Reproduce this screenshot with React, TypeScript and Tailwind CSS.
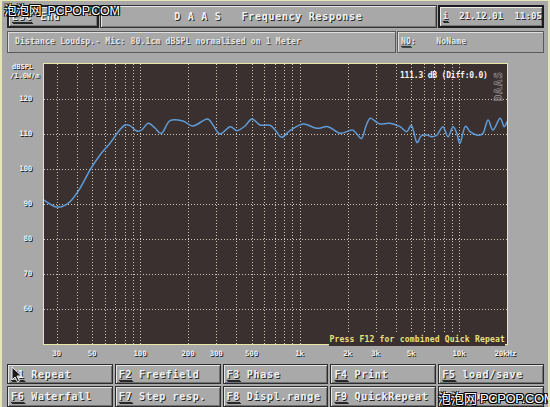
import React from 'react';

const px = (f: number) => 44 + 159.5 * Math.log10(f / 25);
const py = (db: number) => 64 + (130 - db) * 3.5;

const vGrid = [30, 40, 50, 60, 70, 80, 90, 100, 200, 300, 400, 500, 600, 700, 800, 900, 1000, 2000, 3000, 4000, 5000, 6000, 7000, 8000, 9000, 10000];
const hGrid = [120, 110, 100, 90, 80, 70, 60];

const xLabels: [number, string][] = [
  [30, '30'], [50, '50'], [100, '100'], [200, '200'], [300, '300'], [500, '500'],
  [1000, '1k'], [2000, '2k'], [3000, '3k'], [5000, '5k'], [10000, '10k'], [19500, '20kHz'],
];

// traced response, page coordinates
const curve = [
  [44, 200], [50, 204], [55, 206.7], [61.7, 206.7], [70, 201.7], [80, 188.3], [90, 170], [100, 155],
  [110, 143.3], [118.3, 131.7], [125, 125], [130, 125.7], [136.7, 131], [141.7, 130], [148.3, 123.3],
  [155, 128], [161.7, 133.3], [170, 120.7], [183, 121], [193, 126], [207, 119], [213, 125], [220, 134],
  [230, 126.7], [237, 130.7], [245, 126], [252, 119], [260, 125], [270, 125.3], [276, 131], [281.7, 137.3],
  [290, 130.7], [303, 124], [316.7, 128.3], [328, 126.7], [340, 133.3], [351.7, 130], [356, 133],
  [361.7, 138.3], [366, 126], [370, 118.3], [375, 121], [380, 124], [390, 123.3], [400, 126.7],
  [406.7, 131.7], [411.7, 125.7], [416.7, 142.3], [421, 136], [426.7, 135], [431.7, 136.7], [437, 135],
  [443, 126.7], [448, 136.7], [453, 126.7], [457, 134], [460, 143.3], [465, 126.7], [470, 131.7],
  [476.7, 135], [483, 133.3], [488, 120], [493, 130], [500, 118.3], [504, 126.7], [507, 121.7],
];

// catmull-rom -> bezier so the trace looks like a smooth measurement curve
const smoothPath = (pts: number[][]) => {
  let d = `M${pts[0][0]},${pts[0][1]}`;
  for (let i = 0; i < pts.length - 1; i++) {
    const p0 = pts[i - 1] || pts[i];
    const p1 = pts[i];
    const p2 = pts[i + 1];
    const p3 = pts[i + 2] || p2;
    const c1x = p1[0] + (p2[0] - p0[0]) / 6;
    const c1y = p1[1] + (p2[1] - p0[1]) / 6;
    const c2x = p2[0] - (p3[0] - p1[0]) / 6;
    const c2y = p2[1] - (p3[1] - p1[1]) / 6;
    d += ` C${c1x.toFixed(1)},${c1y.toFixed(1)} ${c2x.toFixed(1)},${c2y.toFixed(1)} ${p2[0]},${p2[1]}`;
  }
  return d;
};

const txt = "text-[#f2f2f2] [text-shadow:1px_1px_0_#262626]";
const mono = "font-['DejaVu_Sans_Mono',monospace] font-bold";

const Key = ({ k, label }: { k: string; label: string }) => (
  <div className="flex h-full items-center overflow-hidden border border-[#2c2c2c] bg-[#a9a9a9] pl-[3px] shadow-[inset_1px_1px_0_#e4e4e4,inset_-1px_-1px_0_#707070]">
    <span className={`${mono} ${txt} text-[10px] tracking-[0.7px] whitespace-nowrap`}>
      <span className="underline decoration-[#2a2a2a] underline-offset-2">{k}</span> {label}
    </span>
  </div>
);

const keys: [string, string][] = [
  ['F1', 'Repeat'], ['F2', 'Freefield'], ['F3', 'Phase'], ['F4', 'Print'], ['F5', 'load/save'],
  ['F6', 'Waterfall'], ['F7', 'Step resp.'], ['F8', 'Displ.range'], ['F9', 'QuickRepeat'], ['F10', 'Export'],
];

export default function App() {
  return (
    <div className="relative h-[407px] w-[550px] overflow-hidden border-l-2 border-r-2 border-t border-[#e6e6b6] bg-[#a8a8a8] pl-[5px] pr-[4px] pt-[4px]">
      {/* title row */}
      <div className="flex h-[23px]">
        <div className={`flex w-[95px] items-center border-2 border-[#242424] pl-[3px] shadow-[inset_1px_1px_0_#e8e8e8,inset_-1px_-1px_0_#777] ${mono} ${txt} text-[10px] tracking-[0.7px]`}>
          <span className="underline decoration-[#2a2a2a] underline-offset-2">Esc</span>
          <span className="ml-[8px]">End</span>
        </div>
        <div className={`ml-[1px] flex w-[347px] items-center justify-center border border-[#333] shadow-[inset_1px_1px_0_#e8e8e8,inset_-1px_-1px_0_#777] ${mono} ${txt} text-[10px] tracking-[0.7px] whitespace-pre`}>
          {'D A A S   Frequency Response'}
        </div>
        <div className={`ml-[1px] flex flex-1 items-center border-2 border-[#1c1c1c] pl-[3px] shadow-[inset_1px_1px_0_#ececec,inset_-1px_-1px_0_#777] ${mono} ${txt} text-[9px] tracking-[0.1px] whitespace-pre`}>
          <span className="underline decoration-[#2a2a2a] underline-offset-2">i</span>
          {'  21.12.01  11:05'}
        </div>
      </div>

      {/* info row */}
      <div className="mt-[3px] flex h-[22px]">
        <div className={`flex w-[389px] items-center border border-[#5a5a5a] pl-[7px] shadow-[inset_1px_1px_0_#dedede] ${mono} text-[8px] tracking-[0.2px] text-[#e6e6e6] [text-shadow:1px_1px_0_#4a4a4a] whitespace-pre`}>
          Distance Loudsp.- Mic: 80.1cm dBSPL normalised on 1 Meter
        </div>
        <div className={`ml-[1px] flex flex-1 items-center border border-[#5a5a5a] pl-[3px] shadow-[inset_1px_1px_0_#dedede] ${mono} text-[8px] tracking-[0.2px] text-[#e6e6e6] [text-shadow:1px_1px_0_#4a4a4a] whitespace-pre`}>
          <span className="underline decoration-[#333] underline-offset-2">NO</span>{':    NoName'}
        </div>
      </div>

      {/* chart */}
      <div className="mt-[10px] flex">
        <div className={`relative h-[282px] w-[36px] ${mono}`}>
          <div className={`absolute left-[5px] top-[1px] text-[7px] leading-[7px] ${txt}`}>dBSPL</div>
          <div className={`absolute left-[3px] top-[10px] whitespace-nowrap text-[7px] leading-[7px] ${txt}`}>/1.0W/m</div>
          {hGrid.map((db) => (
            <div
              key={db}
              className={`absolute right-[11px] text-[7.5px] leading-[8px] tracking-[-0.3px] ${txt}`}
              style={{ top: py(db) - 63 - 4 }}
            >
              {db}
            </div>
          ))}
        </div>
        <div className="relative h-[282px] w-[465px] border border-[#e8e8a6] bg-[#3a302f]">
          <svg className="absolute inset-0 h-full w-full" viewBox="44 64 463 280" preserveAspectRatio="none">
            {vGrid.map((f) => {
              const x = Math.round(px(f)) + 0.5;
              return <line key={f} x1={x} y1={64} x2={x} y2={344} stroke="#d2c8b8" strokeWidth={1} strokeDasharray="1 2" />;
            })}
            {hGrid.map((db) => {
              const y = Math.round(py(db)) + 0.5;
              return <line key={db} x1={44} y1={y} x2={507} y2={y} stroke="#d2c8b8" strokeWidth={1} strokeDasharray="1 2" />;
            })}
            <path d={smoothPath(curve)} fill="none" stroke="#5f9bd6" strokeWidth={1.5} strokeLinejoin="round" strokeLinecap="round" />
          </svg>
          <div className={`absolute left-[356px] top-[6px] whitespace-pre text-[8px] tracking-[-0.2px] ${mono} text-[#f4f4f4]`}>
            111.3 dB (Diff:0.0)
          </div>
          <div className={`absolute right-[-7px] top-[14px] origin-center -rotate-90 text-[11px] tracking-[1px] ${mono} text-transparent [-webkit-text-stroke:0.6px_#9a9494]`}>
            DAAS
          </div>
          <div className={`absolute bottom-[-2px] right-[2px] whitespace-pre bg-[#3a302f] text-[8px] tracking-[0.2px] ${mono} text-[#e8e27a]`}>
            Press F12 for combined Quick Repeat
          </div>
        </div>
      </div>

      {/* x axis labels */}
      <div className={`relative h-[15px] ${mono}`}>
        {xLabels.map(([f, l]) => (
          <div
            key={l}
            className={`absolute top-[3px] -translate-x-1/2 whitespace-nowrap text-[7.5px] tracking-[-0.2px] ${txt}`}
            style={{ left: px(f) - 7 }}
          >
            {l}
          </div>
        ))}
      </div>

      {/* function keys */}
      <div className="mt-[4px] grid grid-cols-5 gap-x-[2px] gap-y-[2px] [grid-template-rows:20px_21px]">
        {keys.map(([k, l]) => (
          <Key key={k} k={k} label={l} />
        ))}
      </div>

      {/* cursor */}
      <svg className="absolute left-[9px] top-[365px]" width="12" height="17" viewBox="0 0 12 17">
        <path d="M1 1 L1 14 L4 11 L6.5 16 L8.5 15 L6 10 L10.5 10 Z" fill="#1a1a1a" stroke="#f0f0f0" strokeWidth="1" />
      </svg>

      {/* watermarks */}
      <div className="absolute left-[2px] top-[1px] flex items-baseline whitespace-nowrap text-white [text-shadow:1px_1px_0_#000,-1px_-1px_0_#000,1px_-1px_0_#000,-1px_1px_0_#000]">
        <span className="font-['Noto_Sans_CJK_SC',sans-serif] text-[12.5px] leading-[15px]">泡泡网</span>
        <span className="ml-[6px] font-['Liberation_Sans',sans-serif] text-[12.5px] leading-[15px] tracking-[-0.3px]">PCPOP.COM</span>
      </div>
      <div className="absolute left-[436px] top-[388px] flex items-baseline whitespace-nowrap text-white [text-shadow:1px_1px_0_#000,-1px_-1px_0_#000,1px_-1px_0_#000,-1px_1px_0_#000]">
        <span className="font-['Noto_Sans_CJK_SC',sans-serif] text-[13px] leading-[17px]">泡泡网</span>
        <span className="ml-[3px] font-['Liberation_Sans',sans-serif] text-[13px] leading-[17px] tracking-[-0.4px]">PCPOP.COM</span>
      </div>
    </div>
  );
}
